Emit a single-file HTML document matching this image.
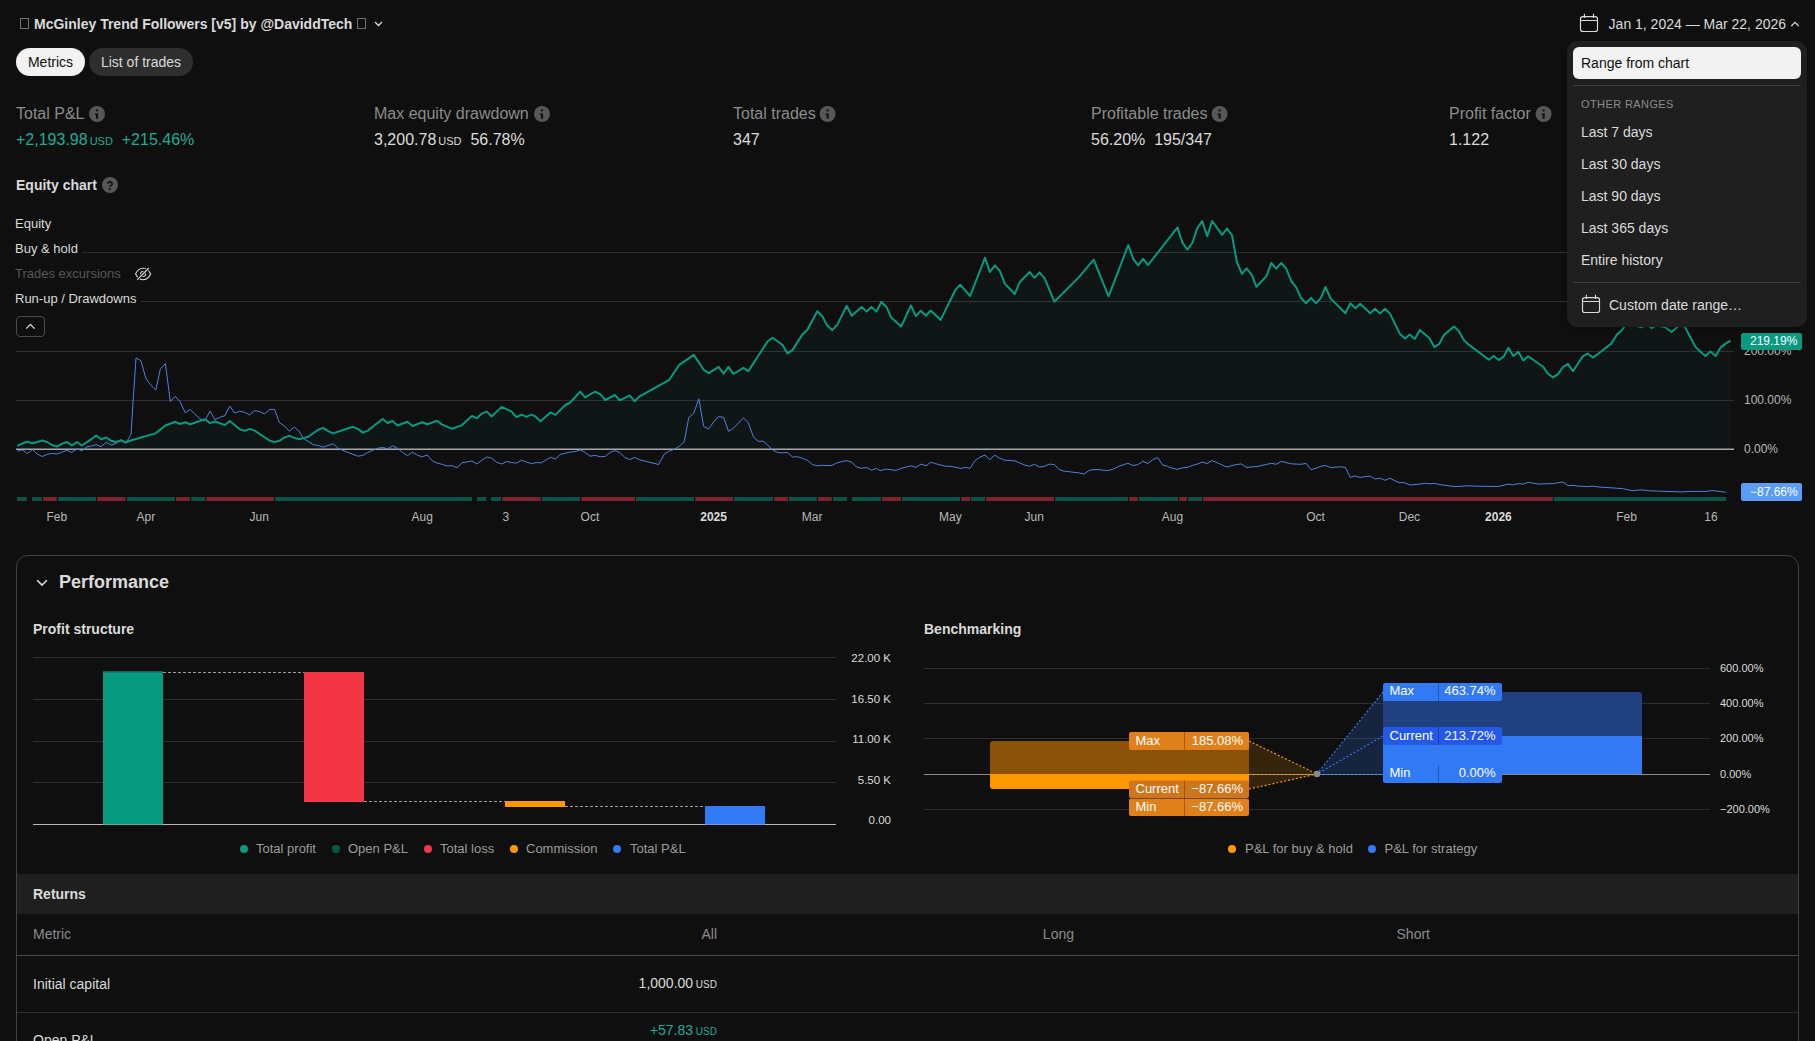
<!DOCTYPE html>
<html lang="en">
<head>
<meta charset="utf-8">
<title>Strategy report</title>
<style>
*{box-sizing:border-box;margin:0;padding:0}
html,body{width:1815px;height:1041px;overflow:hidden;background:#0f0f0f}
body{position:relative;font-family:"Liberation Sans",sans-serif;color:#dbdbdb;font-size:14px}
.t{position:absolute;white-space:nowrap;line-height:1}
.b{font-weight:bold}
.g{color:#8c8c8c}
.abs{position:absolute}
.pill{position:absolute;top:48px;height:28px;border-radius:14px;font-size:14px;line-height:28px;text-align:center}
.lbl{font-size:16px;color:#8c8c8c}
.val{font-size:16px;color:#dbdbdb}
.usd{font-size:11px;margin-left:2px}
.grn{color:#22ab94}
.ax{font-size:12px;color:#b8b8b8}
.ax2{font-size:11px;color:#dbdbdb}
.lgd{left:11px;font-size:13px;padding:6px 4px 6px 4px;background:#0f0f0f}
.tl{top:511px;font-size:12px;color:#b8b8b8;transform:translateX(-50%)}
.tl.b{color:#dbdbdb}
.lg{font-size:13px;color:#9c9c9c}
.dot{position:absolute;width:8px;height:8px;border-radius:50%}
.mi{position:absolute;left:1581px;font-size:14px;line-height:1;color:#dbdbdb;white-space:nowrap}
.tag{position:absolute;font-size:13px;line-height:18px;color:#fff;white-space:nowrap}
svg{position:absolute;left:0;top:0;overflow:visible}
</style>
</head>
<body>

<!-- ===== header ===== -->
<div class="t b" style="left:20px;top:17px;font-size:14px"><span id="tofu1" style="display:inline-block;width:9px;height:11px;border:1px solid #707070;margin-right:5px;vertical-align:0"></span>McGinley Trend Followers [v5] by @DaviddTech<span style="display:inline-block;width:9px;height:11px;border:1px solid #707070;margin-left:5px;vertical-align:0"></span></div>
<svg width="1815" height="60" viewBox="0 0 1815 60"><path d="M375 22 l3.5 3.5 l3.5 -3.5" fill="none" stroke="#dbdbdb" stroke-width="1.3"/></svg>

<div class="pill" style="left:16px;width:69px;background:#f2f2f2;color:#0f0f0f">Metrics</div>
<div class="pill" style="left:89px;width:104px;background:#2e2e2e;color:#dbdbdb">List of trades</div>

<!-- date range -->
<svg width="1815" height="60" viewBox="0 0 1815 60">
 <g fill="none" stroke="#dbdbdb" stroke-width="1.15">
  <rect x="1580.5" y="16.6" width="17" height="14.9" rx="2.3"/>
  <path d="M1580.5 20.5h17M1584.4 13.8v4.2M1593.5 13.8v4.2"/>
  <path d="M1791.3 26 l3.7 -3.7 l3.7 3.7" stroke-width="1.1"/>
 </g>
</svg>
<div class="t" style="left:1608.6px;top:17px;font-size:14px">Jan 1, 2024 — Mar 22, 2026</div>

<!-- ===== metrics row ===== -->
<div class="t lbl" style="left:16px;top:106px">Total P&amp;L</div>
<div class="t val grn" style="left:16px;top:132px">+2,193.98<span class="usd">USD</span>&nbsp; +215.46%</div>
<div class="t lbl" style="left:374px;top:106px">Max equity drawdown</div>
<div class="t val" style="left:374px;top:132px">3,200.78<span class="usd">USD</span>&nbsp; 56.78%</div>
<div class="t lbl" style="left:733px;top:106px">Total trades</div>
<div class="t val" style="left:733px;top:132px">347</div>
<div class="t lbl" style="left:1091px;top:106px">Profitable trades</div>
<div class="t val" style="left:1091px;top:132px">56.20%&nbsp; 195/347</div>
<div class="t lbl" style="left:1449px;top:106px">Profit factor</div>
<div class="t val" style="left:1449px;top:132px">1.122</div>

<svg width="1815" height="400" viewBox="0 0 1815 400"><circle cx="97" cy="114" r="8" fill="#575757"/><circle cx="97" cy="110.4" r="1.15" fill="#0f0f0f"/><path d="M95 113.4h3.1v5.4h-2.1v-3.9h-1z" fill="#0f0f0f"/><circle cx="542" cy="114" r="8" fill="#575757"/><circle cx="542" cy="110.4" r="1.15" fill="#0f0f0f"/><path d="M540 113.4h3.1v5.4h-2.1v-3.9h-1z" fill="#0f0f0f"/><circle cx="827.6" cy="114" r="8" fill="#575757"/><circle cx="827.6" cy="110.4" r="1.15" fill="#0f0f0f"/><path d="M825.6 113.4h3.1v5.4h-2.1v-3.9h-1z" fill="#0f0f0f"/><circle cx="1219.6" cy="114" r="8" fill="#575757"/><circle cx="1219.6" cy="110.4" r="1.15" fill="#0f0f0f"/><path d="M1217.6 113.4h3.1v5.4h-2.1v-3.9h-1z" fill="#0f0f0f"/><circle cx="1543.6" cy="114" r="8" fill="#575757"/><circle cx="1543.6" cy="110.4" r="1.15" fill="#0f0f0f"/><path d="M1541.6 113.4h3.1v5.4h-2.1v-3.9h-1z" fill="#0f0f0f"/><circle cx="110" cy="185" r="8" fill="#575757"/><text x="110" y="189.5" font-family="Liberation Sans, sans-serif" font-weight="bold" font-size="12" fill="#0f0f0f" text-anchor="middle">?</text></svg>
<!-- equity chart title -->
<div class="t b" style="left:16px;top:178px;font-size:14px">Equity chart</div>

<!-- ===== main chart svg ===== -->
<svg id="chart" width="1815" height="1041" viewBox="0 0 1815 1041">
 <g stroke="#2e2e2e" stroke-width="1" shape-rendering="crispEdges">
  <path d="M16 252.5H1734M16 301.5H1734M16 351.5H1734M16 400.5H1734"/>
 </g>
 <!--CHARTDATA-->
 <path d="M17.4 445.8L22.4 443.3L27.4 441.7L32.3 443.3L37.3 442.0L42.2 440.5L47.2 442.0L52.1 445.0L57.1 446.6L62.1 443.6L67.0 442.0L72.0 445.3L76.9 442.0L81.9 445.5L86.9 442.1L91.8 438.8L96.3 435.5L101.2 439.2L106.2 437.5L111.2 440.8L116.1 442.0L121.1 440.3L125.7 442.5L130.7 440.5L155.5 433.4L165.4 425.5L175.3 421.8L180.2 424.0L185.2 422.3L190.2 424.3L205.0 419.3L210.0 423.1L215.0 421.5L224.9 425.1L229.8 421.0L239.8 429.3L244.7 430.9L249.7 428.9L254.6 430.6L269.5 440.5L274.5 442.1L279.4 440.8L284.4 437.5L289.3 435.9L294.3 437.9L299.3 439.2L304.2 437.9L308.3 436.7L318.2 429.8L323.1 427.9L328.1 431.2L333.1 433.4L352.9 426.8L357.9 428.9L362.8 432.6L367.8 430.6L382.6 419.0L387.6 423.0L392.6 421.0L397.5 425.5L407.4 421.8L412.4 426.0L422.3 422.3L427.3 424.3L437.2 420.7L442.1 424.6L452.1 428.8L462.0 425.1L471.9 416.0L476.9 418.2L481.8 413.6L486.8 411.6L491.7 416.5L501.7 406.9L511.6 411.6L516.5 417.2L521.5 414.7L526.4 416.9L531.4 414.7L535.5 416.5L540.5 421.3L550.4 412.4L555.4 414.9L565.3 405.0L570.2 402.5L580.2 391.6L585.1 397.4L590.0 394.5L595.0 391.7L600.2 394.2L605.2 400.0L614.8 395.0L619.8 400.3L629.7 395.4L634.6 401.3L639.6 396.4L669.3 379.8L679.3 364.8L693.8 354.9L703.7 369.8L708.7 373.1L718.6 366.9L723.6 373.6L728.5 366.9L733.5 374.0L743.4 367.8L748.3 371.1L767.7 341.3L772.6 337.7L782.6 345.0L787.5 353.4L792.5 350.1L802.4 334.4L807.4 329.8L817.3 311.2L822.2 316.0L827.2 325.6L832.1 330.1L837.1 325.1L846.7 305.8L851.7 315.7L861.6 306.9L866.5 311.6L871.5 306.9L876.4 311.6L881.4 302.0L886.3 306.7L891.2 317.4L901.2 326.5L910.9 305.5L915.9 316.1L920.8 310.8L925.8 315.8L930.7 310.5L940.7 319.9L955.2 290.2L960.2 284.7L970.1 296.0L985.0 257.9L989.9 272.0L994.9 265.4L999.8 270.8L1004.8 283.6L1014.7 294.0L1019.7 282.2L1029.6 272.0L1034.5 277.8L1039.5 272.3L1044.5 278.1L1054.4 301.7L1079.2 276.9L1093.7 259.6L1108.6 296.3L1128.3 245.0L1133.2 258.8L1138.2 265.4L1143.1 258.8L1148.1 265.0L1177.5 227.4L1182.4 242.7L1187.4 249.6L1192.3 243.0L1197.3 228.1L1202.2 221.0L1207.2 236.1L1212.1 221.0L1222.1 234.8L1227.0 228.5L1232.0 235.1L1236.9 262.0L1241.9 273.9L1246.5 268.3L1251.8 274.9L1256.4 286.8L1266.4 276.1L1271.3 262.9L1276.3 268.6L1281.2 262.9L1286.2 268.6L1291.2 281.0L1296.1 287.1L1301.1 298.1L1306.0 303.3L1311.0 297.9L1316.0 303.3L1320.9 297.9L1325.5 286.8L1330.5 298.4L1345.4 313.3L1350.3 303.3L1355.3 308.3L1360.2 303.7L1370.2 313.3L1375.1 308.8L1380.1 313.6L1385.0 308.8L1390.0 313.6L1399.9 333.9L1404.9 338.4L1409.8 334.4L1414.8 338.9L1419.8 330.1L1429.3 338.1L1434.3 347.1L1439.3 343.8L1444.2 334.8L1454.1 326.5L1459.1 331.4L1464.0 340.2L1469.0 344.9L1488.9 359.8L1493.8 356.0L1498.8 360.1L1503.8 356.4L1508.4 347.7L1513.3 356.0L1518.3 351.8L1523.3 360.4L1528.2 356.3L1543.1 366.7L1548.1 373.8L1553.0 377.4L1558.0 374.1L1562.9 367.0L1567.9 363.9L1572.9 371.2L1582.8 356.3L1587.7 353.5L1592.7 357.6L1597.6 354.3L1611.2 343.6L1617.0 334.5L1621.9 330.3L1626.9 322.9L1641.4 327.4L1646.7 324.5L1651.7 328.2L1655.8 325.4L1664.9 327.0L1671.5 332.0L1677.3 327.0L1681.4 323.7L1684.8 327.0L1695.5 346.9L1700.5 351.8L1705.4 356.0L1710.4 351.5L1715.7 356.0L1720.6 347.4L1725.6 343.6L1730.5 340.7L1730.5 449.5L17.4 449.5Z" fill="rgba(32,132,132,0.06)" stroke="none"/>
 <path d="M16 449.3H1734" stroke="#a8a8a8" stroke-width="1.6" fill="none"/>
 <path d="M17.4 451.2L22.4 449.9L27.4 453.6L32.3 449.6L37.3 454.0L42.2 456.5L47.2 454.4L52.1 453.4L57.1 454.0L62.1 452.1L67.0 450.4L72.0 452.4L76.9 448.8L81.9 450.7L86.9 446.9L91.8 446.0L96.3 444.6L101.2 446.8L106.2 442.1L111.2 445.0L116.1 443.3L121.1 439.7L125.7 443.3L131.0 434.5L133.1 401.2L136.0 357.9L140.9 360.7L145.9 378.3L150.8 385.0L155.8 390.1L160.4 368.9L165.4 363.6L170.3 401.5L175.3 396.2L180.2 402.0L185.2 412.7L190.2 409.4L195.1 414.4L200.1 418.8L205.0 420.5L210.0 411.1L215.0 419.7L219.9 417.2L224.9 415.7L229.8 406.1L234.8 413.2L239.8 411.1L244.7 412.4L249.7 414.9L254.6 410.6L259.6 411.6L264.5 413.9L269.5 409.4L274.5 409.4L279.4 422.6L284.4 426.0L289.3 431.2L294.3 427.1L299.3 431.4L303.3 438.3L313.2 444.6L318.2 445.5L323.1 447.1L333.1 443.8L338.0 448.3L347.9 452.4L357.9 456.2L362.8 455.4L367.8 452.4L372.7 450.4L377.7 448.3L382.6 447.4L387.6 448.8L392.6 445.8L397.5 448.3L402.5 452.4L407.4 455.7L412.4 452.1L417.4 455.2L422.3 456.9L427.3 454.9L432.2 460.7L437.2 463.1L442.1 464.3L447.1 466.0L452.1 465.6L457.0 467.8L462.0 462.8L471.9 461.0L476.9 464.0L481.8 460.2L486.8 457.0L491.7 458.2L496.7 462.3L501.7 464.0L506.6 461.5L511.6 462.6L516.5 463.1L521.5 460.3L526.4 462.0L531.4 463.6L536.4 462.6L541.3 462.8L546.3 459.8L550.4 457.4L555.4 459.0L560.3 454.5L565.3 453.2L570.2 452.1L575.2 451.6L580.2 449.9L585.1 452.4L590.0 456.2L595.0 455.4L600.2 456.7L605.2 456.5L610.2 452.4L614.8 450.7L619.8 452.4L624.7 457.4L629.7 459.5L634.6 457.4L639.6 459.8L658.6 464.5L664.4 454.0L669.3 451.2L674.3 449.3L679.3 446.3L684.2 441.8L688.8 417.4L693.8 413.2L698.8 398.7L703.7 426.4L708.7 428.9L713.6 422.0L718.6 416.5L723.6 417.4L728.5 431.4L733.5 428.1L743.4 417.9L748.3 422.6L753.3 436.9L758.3 441.3L763.2 441.3L767.7 445.0L772.6 450.1L777.6 452.4L782.6 452.9L787.5 452.4L792.5 457.0L797.4 456.7L802.4 458.2L807.4 460.3L812.3 464.5L817.3 465.8L822.2 465.3L827.2 465.6L832.1 465.3L837.1 462.8L842.1 461.5L846.7 460.7L851.7 462.3L856.6 466.9L861.6 468.3L866.5 467.4L871.5 470.2L876.4 468.3L880.0 470.7L886.3 469.1L896.2 470.4L901.2 468.3L911.1 465.8L916.0 467.4L921.0 464.1L926.0 465.8L930.9 462.1L935.9 463.8L945.8 466.3L950.7 466.3L960.7 468.4L965.6 467.4L970.1 468.3L975.0 460.5L980.0 457.2L985.0 455.0L989.9 459.7L994.9 455.2L999.8 458.3L1004.8 460.2L1014.7 460.8L1019.7 463.0L1024.6 465.0L1029.6 466.3L1034.5 464.3L1039.5 467.1L1044.5 466.3L1049.4 464.1L1054.4 464.6L1059.3 469.6L1064.3 471.2L1079.2 472.9L1084.1 474.0L1089.1 470.4L1094.0 469.6L1099.0 469.6L1104.0 470.4L1108.9 470.4L1113.9 468.8L1118.8 466.3L1127.9 463.3L1132.9 465.5L1137.9 464.6L1142.8 461.3L1147.8 463.5L1152.7 459.7L1157.7 457.5L1162.6 465.0L1167.6 466.3L1170.0 467.6L1177.4 469.3L1182.4 467.9L1187.4 467.4L1192.3 465.5L1197.3 464.1L1202.2 462.1L1207.2 463.5L1212.1 460.5L1227.0 467.1L1232.0 465.5L1241.1 463.8L1246.9 467.6L1251.8 466.8L1256.8 466.6L1271.3 463.3L1276.3 464.3L1281.2 461.3L1291.2 463.8L1301.1 464.3L1306.0 463.3L1311.0 469.6L1316.0 468.3L1320.9 466.3L1325.5 465.5L1330.5 467.6L1340.4 466.8L1345.4 467.4L1350.3 477.4L1355.3 475.9L1360.2 477.5L1365.2 476.5L1370.2 476.2L1375.1 479.0L1380.1 478.2L1385.0 480.3L1390.0 478.2L1397.9 482.3L1404.9 482.8L1409.8 485.0L1419.8 484.1L1424.7 483.3L1429.7 483.8L1434.3 483.3L1439.3 484.5L1454.1 486.6L1469.0 485.8L1474.0 486.1L1488.9 486.4L1498.8 486.4L1508.4 484.1L1513.3 485.0L1518.3 483.6L1523.3 484.1L1528.2 482.3L1538.1 484.0L1553.0 483.6L1562.9 482.0L1567.9 485.6L1572.9 485.3L1577.8 486.1L1587.7 486.6L1592.7 486.1L1597.6 486.9L1622.4 488.6L1632.4 490.7L1637.3 490.2L1642.3 489.9L1647.2 490.7L1657.1 491.1L1681.9 491.9L1691.9 491.4L1706.7 491.4L1711.7 490.6L1716.7 491.1L1725.6 492.2" fill="none" stroke="#4c83e0" stroke-width="1" stroke-linejoin="round"/>
 <path d="M17.4 445.8L22.4 443.3L27.4 441.7L32.3 443.3L37.3 442.0L42.2 440.5L47.2 442.0L52.1 445.0L57.1 446.6L62.1 443.6L67.0 442.0L72.0 445.3L76.9 442.0L81.9 445.5L86.9 442.1L91.8 438.8L96.3 435.5L101.2 439.2L106.2 437.5L111.2 440.8L116.1 442.0L121.1 440.3L125.7 442.5L130.7 440.5L155.5 433.4L165.4 425.5L175.3 421.8L180.2 424.0L185.2 422.3L190.2 424.3L205.0 419.3L210.0 423.1L215.0 421.5L224.9 425.1L229.8 421.0L239.8 429.3L244.7 430.9L249.7 428.9L254.6 430.6L269.5 440.5L274.5 442.1L279.4 440.8L284.4 437.5L289.3 435.9L294.3 437.9L299.3 439.2L304.2 437.9L308.3 436.7L318.2 429.8L323.1 427.9L328.1 431.2L333.1 433.4L352.9 426.8L357.9 428.9L362.8 432.6L367.8 430.6L382.6 419.0L387.6 423.0L392.6 421.0L397.5 425.5L407.4 421.8L412.4 426.0L422.3 422.3L427.3 424.3L437.2 420.7L442.1 424.6L452.1 428.8L462.0 425.1L471.9 416.0L476.9 418.2L481.8 413.6L486.8 411.6L491.7 416.5L501.7 406.9L511.6 411.6L516.5 417.2L521.5 414.7L526.4 416.9L531.4 414.7L535.5 416.5L540.5 421.3L550.4 412.4L555.4 414.9L565.3 405.0L570.2 402.5L580.2 391.6L585.1 397.4L590.0 394.5L595.0 391.7L600.2 394.2L605.2 400.0L614.8 395.0L619.8 400.3L629.7 395.4L634.6 401.3L639.6 396.4L669.3 379.8L679.3 364.8L693.8 354.9L703.7 369.8L708.7 373.1L718.6 366.9L723.6 373.6L728.5 366.9L733.5 374.0L743.4 367.8L748.3 371.1L767.7 341.3L772.6 337.7L782.6 345.0L787.5 353.4L792.5 350.1L802.4 334.4L807.4 329.8L817.3 311.2L822.2 316.0L827.2 325.6L832.1 330.1L837.1 325.1L846.7 305.8L851.7 315.7L861.6 306.9L866.5 311.6L871.5 306.9L876.4 311.6L881.4 302.0L886.3 306.7L891.2 317.4L901.2 326.5L910.9 305.5L915.9 316.1L920.8 310.8L925.8 315.8L930.7 310.5L940.7 319.9L955.2 290.2L960.2 284.7L970.1 296.0L985.0 257.9L989.9 272.0L994.9 265.4L999.8 270.8L1004.8 283.6L1014.7 294.0L1019.7 282.2L1029.6 272.0L1034.5 277.8L1039.5 272.3L1044.5 278.1L1054.4 301.7L1079.2 276.9L1093.7 259.6L1108.6 296.3L1128.3 245.0L1133.2 258.8L1138.2 265.4L1143.1 258.8L1148.1 265.0L1177.5 227.4L1182.4 242.7L1187.4 249.6L1192.3 243.0L1197.3 228.1L1202.2 221.0L1207.2 236.1L1212.1 221.0L1222.1 234.8L1227.0 228.5L1232.0 235.1L1236.9 262.0L1241.9 273.9L1246.5 268.3L1251.8 274.9L1256.4 286.8L1266.4 276.1L1271.3 262.9L1276.3 268.6L1281.2 262.9L1286.2 268.6L1291.2 281.0L1296.1 287.1L1301.1 298.1L1306.0 303.3L1311.0 297.9L1316.0 303.3L1320.9 297.9L1325.5 286.8L1330.5 298.4L1345.4 313.3L1350.3 303.3L1355.3 308.3L1360.2 303.7L1370.2 313.3L1375.1 308.8L1380.1 313.6L1385.0 308.8L1390.0 313.6L1399.9 333.9L1404.9 338.4L1409.8 334.4L1414.8 338.9L1419.8 330.1L1429.3 338.1L1434.3 347.1L1439.3 343.8L1444.2 334.8L1454.1 326.5L1459.1 331.4L1464.0 340.2L1469.0 344.9L1488.9 359.8L1493.8 356.0L1498.8 360.1L1503.8 356.4L1508.4 347.7L1513.3 356.0L1518.3 351.8L1523.3 360.4L1528.2 356.3L1543.1 366.7L1548.1 373.8L1553.0 377.4L1558.0 374.1L1562.9 367.0L1567.9 363.9L1572.9 371.2L1582.8 356.3L1587.7 353.5L1592.7 357.6L1597.6 354.3L1611.2 343.6L1617.0 334.5L1621.9 330.3L1626.9 322.9L1641.4 327.4L1646.7 324.5L1651.7 328.2L1655.8 325.4L1664.9 327.0L1671.5 332.0L1677.3 327.0L1681.4 323.7L1684.8 327.0L1695.5 346.9L1700.5 351.8L1705.4 356.0L1710.4 351.5L1715.7 356.0L1720.6 347.4L1725.6 343.6L1730.5 340.7" fill="none" stroke="#089981" stroke-width="2" stroke-linejoin="round"/>
 <path d="M16.9 499H26.9M32.0 499H41.9M58.3 499H96.0M127.0 499H175.0M191.2 499H205.0M275.1 499H300.1M300.0 499H471.9M477.0 499H486.0M491.1 499H501.0M542.0 499H580.0M636.0 499H694.0M734.1 499H773.0M789.0 499H816.9M833.0 499H847.0M852.1 499H880.9M880.0 499H881.0M902.1 499H960.0M971.1 499H985.0M1055.2 499H1127.9M1139.0 499H1178.0M1170.0 499H1177.9M1188.2 499H1202.1M1553.8 499H1726.1" stroke="#0c5448" stroke-width="4" fill="none"/>
 <path d="M43.1 499H56.8M97.1 499H125.7M176.1 499H189.8M206.2 499H274.0M502.1 499H540.8M581.2 499H590.1M590.0 499H635.0M695.1 499H733.0M774.1 499H787.9M818.1 499H831.8M882.1 499H885.9M882.0 499H901.0M961.2 499H970.1M986.1 499H1054.0M1129.1 499H1137.9M1179.2 499H1180.0M1179.1 499H1186.9M1203.1 499H1460.1M1455.0 499H1552.9" stroke="#80222a" stroke-width="4" fill="none"/>
 <!--/CHARTDATA-->
</svg>

<!-- legend of equity chart -->
<div class="t lgd" style="top:211px">Equity</div>
<div class="t lgd" style="top:236px">Buy &amp; hold</div>
<div class="t lgd" style="top:261px;color:#575757;padding-right:46px">Trades excursions</div>
<div class="t lgd" style="top:286px">Run-up / Drawdowns</div>
<div class="abs" style="left:16px;top:316px;width:29px;height:21px;border:1px solid #4a4a4a;border-radius:4px;background:#0f0f0f"></div>
<svg width="400" height="400" viewBox="0 0 400 400">
 <g fill="none" stroke="#dbdbdb" stroke-width="1.2">
  <path d="M135.5 274C137.4 270.2 140 268.3 143.1 268.3S148.8 270.2 150.7 274C148.8 277.8 146.2 279.7 143.1 279.7S137.4 277.8 135.5 274Z" stroke-width="1.1"/>
  <circle cx="143.1" cy="274" r="2.5" stroke-width="1.1"/>
  <path d="M137.2 279.8L148.8 268" stroke="#0f0f0f" stroke-width="2.8"/>
  <path d="M137.2 279.8L148.8 268" stroke-width="1.1"/>
  <path d="M26.2 328.6L30.4 324.4L34.6 328.6" stroke-width="1.3"/>
 </g>
</svg>

<!-- axis labels -->
<div class="t ax" style="left:1744px;top:345px">200.00%</div>
<div class="t ax" style="left:1744px;top:394px">100.00%</div>
<div class="t ax" style="left:1744px;top:443px">0.00%</div>
<div class="abs" style="left:1741px;top:333px;width:61px;height:17px;background:#089981;border-radius:2px"></div>
<div class="t" style="left:1750px;top:335px;font-size:12px;color:#fff">219.19%</div>
<div class="abs" style="left:1741px;top:483px;width:61px;height:17.5px;background:#5b9cf6;border-radius:2px"></div>
<div class="t" style="left:1750px;top:485.5px;font-size:12px;color:#fff">−87.66%</div>

<!-- time labels -->
<div id="timeax"><div class="t tl" style="left:56.8px">Feb</div><div class="t tl" style="left:145.9px">Apr</div><div class="t tl" style="left:259.2px">Jun</div><div class="t tl" style="left:422.2px">Aug</div><div class="t tl" style="left:505.9px">3</div><div class="t tl" style="left:589.9px">Oct</div><div class="t tl b" style="left:713.6px">2025</div><div class="t tl" style="left:812.1px">Mar</div><div class="t tl" style="left:950.3px">May</div><div class="t tl" style="left:1034.3px">Jun</div><div class="t tl" style="left:1172.4px">Aug</div><div class="t tl" style="left:1315.6px">Oct</div><div class="t tl" style="left:1409.4px">Dec</div><div class="t tl b" style="left:1498.4px">2026</div><div class="t tl" style="left:1626.5px">Feb</div><div class="t tl" style="left:1710.9px">16</div></div>

<!-- ===== performance panel ===== -->
<div class="abs" style="left:16px;top:555px;width:1783px;height:520px;border:1px solid #434343;border-radius:12px"></div>
<svg width="1815" height="1041" viewBox="0 0 1815 1041"><path d="M37.1 580.2 l4.9 4.9 l4.9 -4.9" fill="none" stroke="#dbdbdb" stroke-width="1.6"/></svg>
<div class="t b" style="left:59px;top:573px;font-size:18px">Performance</div>
<div class="t b" style="left:33px;top:622px;font-size:14px">Profit structure</div>
<div class="t b" style="left:924px;top:622px;font-size:14px">Benchmarking</div>


<!-- ===== profit structure + benchmarking ===== -->
<svg width="1815" height="1041" viewBox="0 0 1815 1041" font-family="Liberation Sans, sans-serif">
 <g stroke="#2e2e2e" stroke-width="1" shape-rendering="crispEdges">
  <path d="M33 657.5H836M33 699.5H836M33 741.5H836M33 782.5H836"/>
  <path d="M924 668.5H1710M924 703.5H1710M924 738.5H1710M924 809.5H1710"/>
 </g>
 <path d="M33 824.5H836" stroke="#b8b8b8" stroke-width="1" shape-rendering="crispEdges"/>
 <rect x="103" y="671" width="60" height="153.5" fill="#089981"/>
 <rect x="103" y="671" width="60" height="1.5" fill="#06665a"/>
 <rect x="304" y="672" width="60" height="130" fill="#f23645"/>
 <rect x="505" y="801" width="60" height="6" fill="#ff9800"/>
 <rect x="705" y="806" width="60" height="18.5" fill="#3179f5"/>
 <g stroke="#9c9c9c" stroke-width="1" stroke-dasharray="3 2" shape-rendering="crispEdges">
  <path d="M163 672.5H304M364 801.5H505M565 806.5H705"/>
 </g>
 <g font-size="11.5" fill="#dbdbdb" text-anchor="end">
  <text x="891" y="662">22.00 K</text><text x="891" y="703">16.50 K</text><text x="891" y="743">11.00 K</text><text x="891" y="784">5.50 K</text><text x="891" y="824">0.00</text>
 </g>
 <g font-size="11" fill="#dbdbdb">
  <text x="1720" y="672">600.00%</text><text x="1720" y="707">400.00%</text><text x="1720" y="742">200.00%</text><text x="1720" y="778">0.00%</text><text x="1720" y="813">−200.00%</text>
 </g>
 <!-- benchmarking: cones -->
 <path d="M1249 741L1317 774L1249 789Z" fill="rgba(255,152,0,0.16)"/>
 <path d="M1383 692L1317 774H1383Z" fill="rgba(49,121,245,0.2)"/>
 <path d="M924 774.5H1710" stroke="#8c8c8c" stroke-width="1" shape-rendering="crispEdges"/>
 <g fill="none" stroke="#ff9800" stroke-width="1.2" stroke-dasharray="2 2">
  <path d="M1249 741L1317 774M1249 789L1317 774M1249 774.5H1317"/>
 </g>
 <g fill="none" stroke="#3179f5" stroke-width="1.2" stroke-dasharray="2 2">
  <path d="M1383 692L1317 774M1383 736L1317 774M1383 774.5H1317"/>
 </g>
 <!-- orange bars -->
 <path d="M993 741H1249V774H990V744a3 3 0 0 1 3-3Z" fill="#8a5209"/>
 <path d="M990 774H1249V789H993a3 3 0 0 1-3-3Z" fill="#ff9800"/>
 <!-- blue bars -->
 <path d="M1383 692H1639a3 3 0 0 1 3 3V736H1383Z" fill="#20407f"/>
 <rect x="1383" y="736" width="259" height="38" fill="#3179f5"/>
 <circle cx="1317" cy="774" r="3.2" fill="#8c8c8c"/>
 <!-- orange tags -->
 <g>
  <rect x="1129" y="732" width="120" height="18" rx="2" fill="#e0801b"/>
  <rect x="1129" y="780.5" width="120" height="17.5" rx="2" fill="#cf751c"/>
  <rect x="1129" y="798.5" width="120" height="17.5" rx="2" fill="#e0801b"/>
  <path d="M1184.5 732V750M1184.5 780.5V798M1184.5 798.5V816" stroke="rgba(0,0,0,0.28)" stroke-width="1"/>
 </g>
 <!-- blue tags -->
 <g>
  <rect x="1383" y="683" width="119" height="18" rx="2" fill="#3179f5"/>
  <rect x="1383" y="727" width="119" height="18" rx="2" fill="#2458e6"/>
  <rect x="1383" y="765" width="119" height="18" rx="2" fill="#3179f5"/>
  <path d="M1438.5 683V701M1438.5 727V745M1438.5 765V783" stroke="rgba(0,0,0,0.28)" stroke-width="1"/>
 </g>
 <g font-size="13" fill="#ffffff">
  <text x="1135.5" y="745">Max</text><text x="1243" y="745" text-anchor="end">185.08%</text>
  <text x="1135.5" y="793">Current</text><text x="1243" y="793" text-anchor="end">−87.66%</text>
  <text x="1135.5" y="811">Min</text><text x="1243" y="811" text-anchor="end">−87.66%</text>
  <text x="1389.5" y="695">Max</text><text x="1495.5" y="695" text-anchor="end">463.74%</text>
  <text x="1389.5" y="740">Current</text><text x="1495.5" y="740" text-anchor="end">213.72%</text>
  <text x="1389.5" y="777">Min</text><text x="1495.5" y="777" text-anchor="end">0.00%</text>
 </g>
 <!-- legends -->
 <g>
  <circle cx="244" cy="849" r="4" fill="#089981"/><circle cx="336" cy="849" r="4" fill="#06574a"/><circle cx="428" cy="849" r="4" fill="#f23645"/><circle cx="514" cy="849" r="4" fill="#ff9800"/><circle cx="617" cy="849" r="4" fill="#3179f5"/>
  <circle cx="1232" cy="849" r="4" fill="#ff9800"/><circle cx="1372" cy="849" r="4" fill="#3179f5"/>
 </g>
 <g font-size="13" fill="#9c9c9c">
  <text x="256" y="853">Total profit</text><text x="348" y="853">Open P&amp;L</text><text x="440" y="853">Total loss</text><text x="526" y="853">Commission</text><text x="630" y="853">Total P&amp;L</text>
  <text x="1245" y="853">P&amp;L for buy &amp; hold</text><text x="1384.5" y="853">P&amp;L for strategy</text>
 </g>
</svg>

<!-- returns table -->
<div class="abs" style="left:17px;top:874px;width:1781px;height:40px;background:#1f1f1f"></div>
<div class="t b" style="left:33px;top:887px;font-size:14px">Returns</div>
<div class="t g" style="left:33px;top:927px;font-size:14px">Metric</div>
<div class="t g" style="right:1098px;top:927px;font-size:14px">All</div>
<div class="t g" style="right:741px;top:927px;font-size:14px">Long</div>
<div class="t g" style="right:385px;top:927px;font-size:14px">Short</div>
<div class="abs" style="left:17px;top:955px;width:1781px;height:1px;background:#4a4a4a"></div>
<div class="t" style="left:33px;top:977px;font-size:14px">Initial capital</div>
<div class="t" style="right:1098px;top:976px;font-size:14px">1,000.00<span style="font-size:10px"> USD</span></div>
<div class="abs" style="left:17px;top:1012px;width:1781px;height:1px;background:#2e2e2e"></div>
<div class="t" style="left:33px;top:1033px;font-size:14px">Open P&amp;L</div>
<div class="t grn" style="right:1098px;top:1023px;font-size:14px">+57.83<span style="font-size:10px"> USD</span></div>

<!-- ===== dropdown ===== -->
<div class="abs" style="left:1567px;top:41px;width:240px;height:286px;background:#1f1f1f;border-radius:10px;box-shadow:0 2px 4px rgba(0,0,0,.2)"></div>
<div class="abs" style="left:1573px;top:47px;width:228px;height:32px;background:#f2f2f2;border-radius:6px"></div>
<div class="mi" style="top:56px;color:#0f0f0f">Range from chart</div>
<div class="abs" style="left:1573px;top:85px;width:228px;height:1px;background:#3d3d3d"></div>
<div class="mi" style="top:99px;font-size:11px;color:#8c8c8c;letter-spacing:.4px">OTHER RANGES</div>
<div class="mi" style="top:125px">Last 7 days</div>
<div class="mi" style="top:157px">Last 30 days</div>
<div class="mi" style="top:189px">Last 90 days</div>
<div class="mi" style="top:221px">Last 365 days</div>
<div class="mi" style="top:253px">Entire history</div>
<div class="abs" style="left:1573px;top:282px;width:228px;height:1px;background:#3d3d3d"></div>
<svg width="1815" height="400" viewBox="0 0 1815 400">
 <g fill="none" stroke="#dbdbdb" stroke-width="1.15">
  <rect x="1582.5" y="297.6" width="17" height="14.9" rx="2.3"/>
  <path d="M1582.5 301.5h17M1586.4 294.8v4.2M1595.5 294.8v4.2"/>
 </g>
</svg>
<div class="mi" style="left:1609px;top:298px">Custom date range…</div>

</body>
</html>
